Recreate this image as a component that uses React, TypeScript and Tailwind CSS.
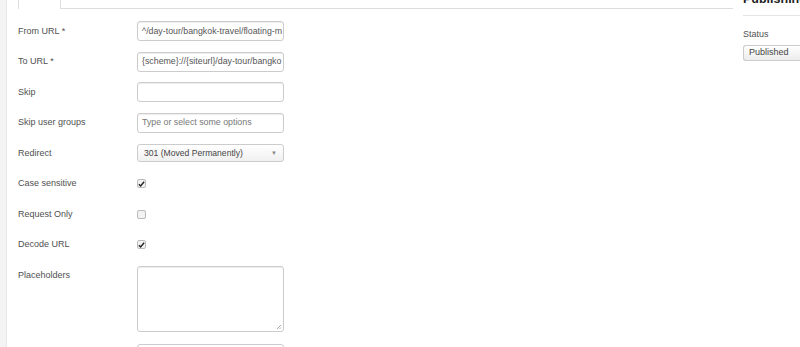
import React from "react";

const font = { fontFamily: '"Liberation Sans", Arial, sans-serif' };

function Row({ label, children }: { label: string; children: React.ReactNode }) {
  return (
    <div className="flex items-center h-[30.5px]">
      <label className="w-[119px] shrink-0 text-[9px] text-[#505050]">{label}</label>
      {children}
    </div>
  );
}

function TextInput({ value, placeholder }: { value?: string; placeholder?: string }) {
  return (
    <div className="w-[147px] h-[20px] border border-[#ccc] rounded-[3px] bg-white shadow-[inset_0_1px_1px_rgba(0,0,0,0.075)] px-[4px] flex items-center overflow-hidden whitespace-nowrap text-[8.8px] text-[#555]">
      {value ?? <span className="text-[#777]">{placeholder}</span>}
    </div>
  );
}

function Check({ checked }: { checked: boolean }) {
  return (
    <div className="w-[9px] h-[9px] border border-[#bbb] rounded-[2px] bg-[#f2f2f2] flex items-center justify-center">
      {checked && (
        <svg width="8" height="8" viewBox="0 0 8 8">
          <path d="M1 4.2 L3 6.3 L7 1.5" stroke="#222" strokeWidth="1.6" fill="none" />
        </svg>
      )}
    </div>
  );
}

export default function App() {
  return (
    <div style={font} className="w-[800px] h-[347px] overflow-hidden bg-white flex">
      <div className="w-[7px] shrink-0 bg-[#f3f3f3] border-r border-[#e8e8e8]" />
      <div className="w-[726px] shrink-0 pl-[11px]">
        {/* tabs */}
        <div className="flex h-[9px]">
          <div className="w-[43px] border-l border-r border-[#ddd]" />
          <div className="flex-1 border-b border-[#ddd]" />
        </div>
        <div className="pt-[7px]">
          <Row label="From URL *"><TextInput value="^/day-tour/bangkok-travel/floating-m" /></Row>
          <Row label="To URL *"><TextInput value="{scheme}://{siteurl}/day-tour/bangko" /></Row>
          <Row label="Skip"><TextInput value="" /></Row>
          <Row label="Skip user groups"><TextInput placeholder="Type or select some options" /></Row>
          <Row label="Redirect">
            <div className="w-[147px] h-[18px] border border-[#ccc] rounded-[3px] bg-gradient-to-b from-white to-[#f0f0f0] px-[6px] flex items-center justify-between text-[8.6px] text-[#444]">
              <span>301 (Moved Permanently)</span>
              <span className="text-[6px] text-[#888]">▼</span>
            </div>
          </Row>
          <Row label="Case sensitive"><Check checked /></Row>
          <Row label="Request Only"><Check checked={false} /></Row>
          <Row label="Decode URL"><Check checked /></Row>
          <div className="flex items-start pt-[6px]">
            <label className="w-[119px] shrink-0 mt-[2px] text-[9px] text-[#505050] leading-[14px]">Placeholders</label>
            <div className="relative w-[147px] h-[66px] border border-[#ccc] rounded-[3px] shadow-[inset_0_1px_1px_rgba(0,0,0,0.075)]">
              <svg className="absolute right-[1px] bottom-[1px]" width="6" height="6" viewBox="0 0 6 6">
                <path d="M1 5 L5 1 M3.5 5 L5 3.5" stroke="#999" strokeWidth="0.8" />
              </svg>
            </div>
          </div>
          <div className="flex pt-[12px]">
            <div className="w-[119px]" />
            <div className="w-[147px] h-[20px] border border-[#ccc] rounded-[3px]" />
          </div>
        </div>
      </div>
      <div className="flex-1 pl-[10px]">
        <div className="h-[16px] border-b border-[#e5e5e5] relative overflow-hidden">
          <div className="absolute top-[-10px] left-0 text-[12.5px] font-bold text-[#222] whitespace-nowrap">Publishing o</div>
        </div>
        <div className="pt-[12px] text-[9px] text-[#505050]">Status</div>
        <div className="mt-[3px] h-[16px] border border-[#ccc] border-r-0 rounded-l-[3px] bg-gradient-to-b from-white to-[#ececec] pl-[5px] flex items-center text-[9px] text-[#444]">
          Published
        </div>
      </div>
    </div>
  );
}
